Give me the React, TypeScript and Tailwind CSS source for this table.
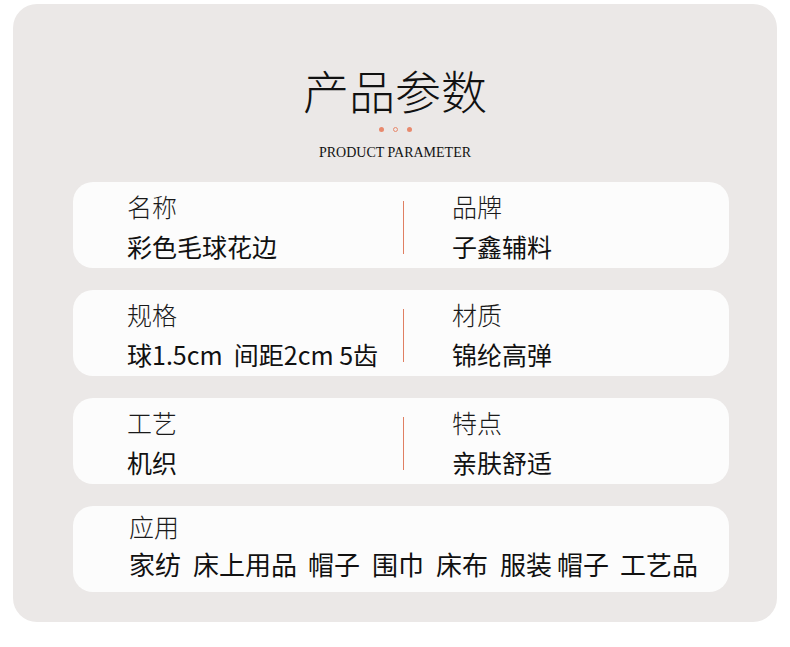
import React from "react";

const cjk = { fontFamily: '"Noto Sans CJK SC", "Noto Sans", sans-serif' };

function Cell({ label, value }: { label: string; value: string }) {
  return (
    <div className="flex flex-col gap-[8px] pt-[8px]">
      <div className="text-[25px] leading-[32px] font-light text-[#1a1a1a] whitespace-pre">{label}</div>
      <div className="text-[25px] leading-[32px] font-normal text-[#111] whitespace-pre">{value}</div>
    </div>
  );
}

function Card({ l, r }: { l: [string, string]; r: [string, string] }) {
  return (
    <div className="h-[86px] w-[656px] rounded-[20px] bg-[#fcfcfc] flex">
      <div className="w-[330px] pl-[54px]">
        <Cell label={l[0]} value={l[1]} />
      </div>
      <div className="w-[1px] h-[53px] self-center mt-[4px] bg-[#e07f62]" />
      <div className="pl-[48px]">
        <Cell label={r[0]} value={r[1]} />
      </div>
    </div>
  );
}

export default function App() {
  const apps = ["家纺", "床上用品", "帽子", "围巾", "床布", "服装", "帽子", "工艺品"];
  const gaps = [12, 11, 12, 12, 12, 5, 11];
  return (
    <div className="w-[790px] h-[647px] bg-white pt-[4px] pl-[13px]" style={cjk}>
      <div className="w-[764px] h-[618px] rounded-[24px] bg-[#ebe8e7] flex flex-col items-center">
        <div className="mt-[62px] text-[46px] leading-[46px] font-light text-[#111]">产品参数</div>
        <div className="mt-[15px] flex items-center gap-[9px]">
          <div className="w-[5px] h-[5px] rounded-full bg-[#e8896d]" />
          <div className="w-[5px] h-[5px] rounded-full border border-[#e8896d]" />
          <div className="w-[5px] h-[5px] rounded-full bg-[#e8896d]" />
        </div>
        <div
          className="mt-[13px] text-[14px] leading-[16px] text-[#111]"
          style={{ fontFamily: '"Liberation Serif", serif' }}
        >
          PRODUCT PARAMETER
        </div>
        <div className="mt-[21px] self-start ml-[60px] flex flex-col gap-[22px]">
          <Card l={["名称", "彩色毛球花边"]} r={["品牌", "子鑫辅料"]} />
          <Card l={["规格", "球1.5cm  间距2cm 5齿"]} r={["材质", "锦纶高弹"]} />
          <Card l={["工艺", "机织"]} r={["特点", "亲肤舒适"]} />
          <div className="h-[86px] w-[656px] rounded-[20px] bg-[#fcfcfc] pl-[56px] pt-[4px] flex flex-col gap-[6px]">
            <div className="text-[25px] leading-[32px] font-light text-[#1a1a1a]">应用</div>
            <div className="flex text-[26px] leading-[32px] text-[#111]">
              {apps.map((a, i) => (
                <span key={i} style={{ marginRight: i < gaps.length ? gaps[i] : 0 }}>
                  {a}
                </span>
              ))}
            </div>
          </div>
        </div>
      </div>
    </div>
  );
}
